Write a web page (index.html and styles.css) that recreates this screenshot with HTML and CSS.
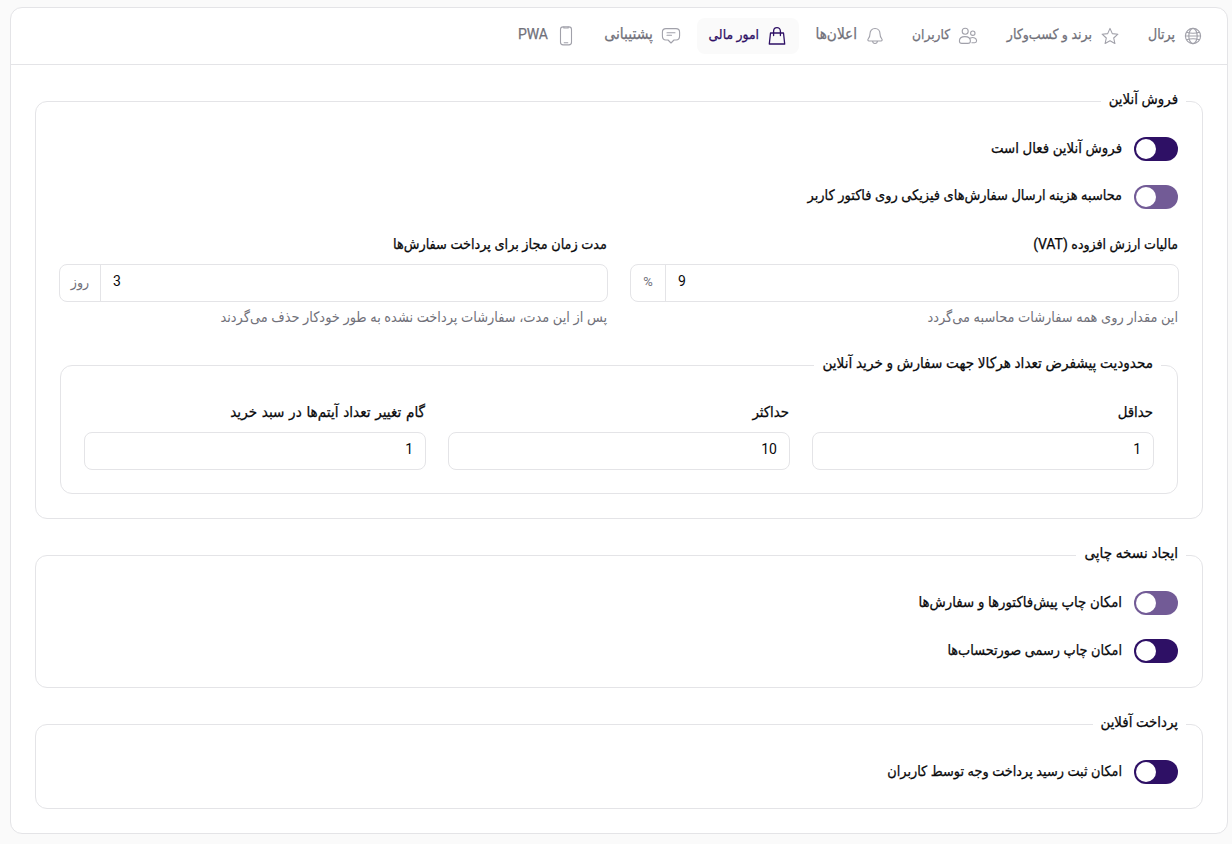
FILE: index.html
```html
<!DOCTYPE html>
<html lang="fa" dir="rtl">
<head>
<meta charset="UTF-8" />
<meta name="viewport" content="width=device-width, initial-scale=1" />
<title>امور مالی</title>
<link rel="stylesheet" href="styles.css">
</head>
<body>

<main class="card">
  <nav class="tabs">
    <a class="tab tab-portal">
      <svg class="icon" viewBox="0 0 20 20"><circle cx="10" cy="10" r="7.600"/><ellipse cx="10" cy="10" rx="4.200" ry="7.600"/><path d="M3.500 6.200q6.500 2 13 0M2.400 10h15.200M3.500 13.800q6.500-2 13 0"/></svg>
      <span>پرتال</span>
    </a>
    <a class="tab tab-brand">
      <svg class="icon" viewBox="0 0 20 20"><path d="M10 2.400l2.300 5.200 5.600.6-4.200 3.800 1.200 5.500-4.900-2.800-4.900 2.800 1.200-5.500-4.200-3.800 5.600-.6z"/></svg>
      <span>برند و کسب‌وکار</span>
    </a>
    <a class="tab tab-users">
      <svg class="icon" viewBox="0 0 20 20"><circle cx="7.200" cy="5.300" r="3"/><circle cx="14.800" cy="7.200" r="2.200"/><path d="M1.400 15c0-3 2.400-4.400 5.500-4.400s5.500 1.400 5.500 4.400c0 1.700-1 2.400-2.500 2.400h-6c-1.500 0-2.500-.7-2.500-2.400zM12.500 12c3-1.200 6.100.2 6.100 2.800 0 1.300-.7 1.900-1.900 1.900h-2.800"/></svg>
      <span>کاربران</span>
    </a>
    <a class="tab tab-bell">
      <svg class="icon" viewBox="0 0 20 20"><path d="M10 2.500c-3.200 0-5 2.300-5 5.300 0 3-.8 3.800-1.900 5.200-.6.900-.2 2 .9 2h12c1.100 0 1.500-1.100.9-2-1.100-1.400-1.900-2.200-1.900-5.200 0-3-1.800-5.300-5-5.300zM7.500 15c.2 1.600 1.200 2.500 2.500 2.500s2.300-.9 2.500-2.500"/></svg>
      <span>اعلان‌ها</span>
    </a>
    <a class="tab tab-money active">
      <svg class="icon" viewBox="0 0 20 20"><path d="M3.500 7h13l1.200 11h-15.400zM6.600 9.500v-4.300c0-4.800 6.800-4.800 6.800 0v4.300"/></svg>
      <span>امور مالی</span>
    </a>
    <a class="tab tab-support">
      <svg class="icon" viewBox="0 0 20 20"><path d="M5 2.600h10c2.600 0 3.600 1.200 3.600 3.600v3.600c0 2.800-1 4.200-3.400 4.200h-2.200l-3 3-3-3h-2.200c-2.400 0-3.400-1.400-3.400-4.200v-3.600c0-2.400 1-3.600 3.600-3.600zM6 6.700h8M6 9.300h4.500"/></svg>
      <span>پشتیبانی</span>
    </a>
    <a class="tab tab-pwa">
      <svg class="icon" viewBox="0 0 20 20"><rect x="4.500" y=".9" width="11" height="18" rx="2.600"/><path d="M7.800 1v1h4.400v-1M8.200 16.800h3.600"/></svg>
      <span>PWA</span>
    </a>
  </nav>

  <form class="content">
    <fieldset>
      <legend class="text-lg">فروش آنلاین</legend>
      <label class="switch-row"><span class="switch"></span><span class="text-lg">فروش آنلاین فعال است</span></label>
      <label class="switch-row"><span class="switch light"></span><span class="text-md">محاسبه هزینه ارسال سفارش‌های فیزیکی روی فاکتور کاربر</span></label>

      <div class="fields">
        <div class="field">
          <label for="vat">مالیات ارزش افزوده (VAT)</label>
          <div class="group">
            <input type="text" id="vat" value="9" dir="ltr">
            <span class="unit">%</span>
          </div>
          <p class="hint">این مقدار روی همه سفارشات محاسبه می‌گردد</p>
        </div>
        <div class="field">
          <label for="days" class="text-sm">مدت زمان مجاز برای پرداخت سفارش‌ها</label>
          <div class="group">
            <input type="text" id="days" value="3" dir="ltr">
            <span class="unit unit-day">روز</span>
          </div>
          <p class="hint">پس از این مدت، سفارشات پرداخت نشده به طور خودکار حذف می‌گردند</p>
        </div>
      </div>

      <fieldset class="limits">
        <legend class="text-xl">محدودیت پیشفرض تعداد هرکالا جهت سفارش و خرید آنلاین</legend>
        <div class="fields">
          <div class="field">
            <label for="min" class="text-lg">حداقل</label>
            <div class="group"><input type="text" id="min" value="1"></div>
          </div>
          <div class="field">
            <label for="max" class="text-lg">حداکثر</label>
            <div class="group"><input type="text" id="max" value="10"></div>
          </div>
          <div class="field">
            <label for="step" class="text-xl step-label">گام تغییر تعداد آیتم‌ها در سبد خرید</label>
            <div class="group"><input type="text" id="step" value="1"></div>
          </div>
        </div>
      </fieldset>
    </fieldset>

    <fieldset>
      <legend class="text-xl">ایجاد نسخه چاپی</legend>
      <label class="switch-row"><span class="switch light"></span><span class="text-lg">امکان چاپ پیش‌فاکتورها و سفارش‌ها</span></label>
      <label class="switch-row"><span class="switch"></span><span class="text-sm">امکان چاپ رسمی صورتحساب‌ها</span></label>
    </fieldset>

    <fieldset>
      <legend class="text-lg">پرداخت آفلاین</legend>
      <label class="switch-row"><span class="switch"></span><span class="text-sm">امکان ثبت رسید پرداخت وجه توسط کاربران</span></label>
    </fieldset>
  </form>
</main>

</body>
</html>
```
FILE: styles.css
```css
* {
  box-sizing: border-box;
}
body {
  margin: 0;
  padding: 7px 4px 10px 10px;
  background: #fafafa;
  color: #09090b;
  font-family: Roboto, "DejaVu Sans Condensed", "DejaVu Sans", sans-serif;
  font-size: 14px;
  font-weight: 400;
  line-height: 24px;
}
.card {
  background: #fff;
  border: 1px solid #e4e4e7;
  border-radius: 12px;
}
.tabs {
  display: flex;
  gap: 4px;
  height: 57px;
  padding: 10px 12px 0;
  border-bottom: 1px solid #e4e4e7;
}
.tab {
  display: flex;
  align-items: center;
  gap: 8px;
  height: 36px;
  padding: 0 12px;
  border-radius: 8px;
  color: #71717a;
  white-space: nowrap;
}
.tab span {
  margin-top: -4px;
  -webkit-text-stroke: 0.25px;
}
.tab.active {
  background: #fafafa;
  color: #2e1065;
}
.tab-portal { width: 79px; }
.tab-brand { width: 138px; }
.tab-users { width: 89px; font-size: 13.6px; }
.tab-bell { width: 94px; font-size: 15.2px; }
.tab-money { width: 102px; font-size: 13.8px; }
.tab-support { width: 101px; font-size: 15.5px; }
.tab-pwa { width: 82px; }
.icon {
  flex: none;
  width: 20px;
  height: 20px;
  fill: none;
  stroke: #a1a1aa;
  stroke-width: 1.1;
  stroke-linejoin: round;
  stroke-linecap: round;
}
.active .icon {
  stroke: #2e1065;
  stroke-width: 1.3;
}
.content {
  display: flex;
  flex-direction: column;
  gap: 25px;
  padding: 25px 24px 24px;
}
fieldset {
  min-width: 0;
  margin: 0;
  padding: 24px 24px 24px;
  border: 1px solid #e4e4e7;
  border-radius: 12px;
}
legend {
  height: 23px;
  margin-right: -8px;
  padding: 0 8px;
  line-height: 19px;
  white-space: nowrap;
}
legend, .switch-row, .field label {
  -webkit-text-stroke: 0.25px;
}
.text-sm { font-size: 14.3px; }
.text-md { font-size: 14.4px; }
.text-lg { font-size: 14.8px; }
.text-xl { font-size: 15.1px; }
.switch-row {
  display: flex;
  gap: 12px;
  height: 24px;
  line-height: 22px;
  white-space: nowrap;
}
.switch-row + .switch-row {
  margin-top: 24px;
}
.switch {
  display: flex;
  flex: none;
  justify-content: flex-end;
  width: 44px;
  height: 24px;
  padding: 2px;
  border-radius: 12px;
  background: #2e1065;
}
.switch::after {
  content: "";
  width: 20px;
  height: 20px;
  border-radius: 50%;
  background: #fff;
}
.switch.light {
  background: #725b96;
}
.fields {
  display: flex;
  gap: 22px;
  margin: 24px -1px 0;
}
.field {
  flex: 1;
  min-width: 0;
}
.field label {
  display: block;
  height: 24px;
  margin-bottom: 7px;
  padding: 0 1px;
  line-height: 22px;
  white-space: nowrap;
}
.field .step-label {
  word-spacing: 1px;
}
.group {
  display: flex;
  height: 38px;
  border: 1px solid #e4e4e7;
  border-radius: 8px;
}
.group input {
  flex: 1;
  min-width: 0;
  padding: 0 12px 4px;
  border: none;
  outline: none;
  background: none;
  color: inherit;
  font: inherit;
}
.unit {
  width: 35px;
  border-right: 1px solid #e4e4e7;
  color: #71717a;
  font-size: 13px;
  line-height: 34px;
  text-align: center;
}
.unit-day {
  width: 41px;
  font-size: 14px;
}
.hint {
  height: 24px;
  margin: 4px 0 0;
  padding: 0 1px;
  color: #71717a;
  font-size: 14.4px;
  line-height: 24px;
  white-space: nowrap;
}
.limits {
  margin-top: 24px;
  padding-bottom: 23px;
}
.limits .fields {
  margin-top: 0;
}
```
